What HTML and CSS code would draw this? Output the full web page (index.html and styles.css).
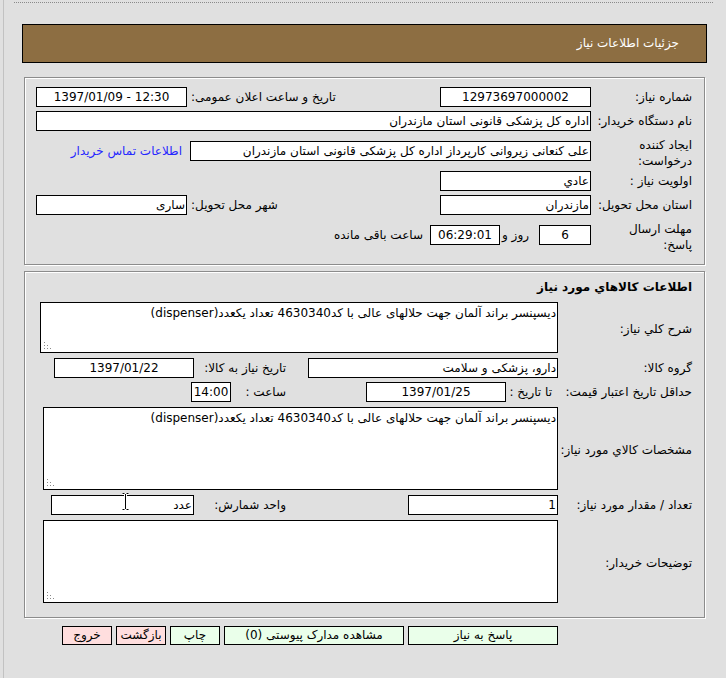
FILE: index.html
```html
<!DOCTYPE html>
<html lang="fa">
<head>
<meta charset="utf-8">
<title>جزئیات اطلاعات نیاز</title>
<link rel="stylesheet" href="styles.css">
</head>
<body>
<div class="page">
  <div class="topline"></div>
  <div class="header"><span>جزئیات اطلاعات نیاز</span></div>

  <div class="fs fs1">
    <div class="grid1">
      <div class="lbl">شماره نیاز:</div>
      <div class="cell"><div class="inp w151 c">12973697000002</div></div>
      <div class="lbl2">تاریخ و ساعت اعلان عمومی:</div>
      <div class="cell"><div class="inp w151 c ltr">1397/01/09 - 12:30</div></div>

      <div class="lbl">نام دستگاه خریدار:</div>
      <div class="cell span3"><div class="inp w555">اداره کل پزشکی قانونی استان مازندران</div></div>

      <div class="lbl two">ایجاد کننده<br>درخواست:</div>
      <div class="cell span2"><div class="inp w401">علی کنعانی زیروانی کارپرداز اداره کل پزشکی قانونی استان مازندران</div></div>
      <div class="cell"><a class="link" href="#">اطلاعات تماس خریدار</a></div>

      <div class="lbl">اولویت نیاز :</div>
      <div class="cell"><div class="inp w151">عادي</div></div>
      <div class="cell"></div>
      <div class="cell"></div>

      <div class="lbl">استان محل تحویل:</div>
      <div class="cell"><div class="inp w151">مازندران</div></div>
      <div class="lbl2">شهر محل تحویل:</div>
      <div class="cell"><div class="inp w151">ساری</div></div>

      <div class="lbl two">مهلت ارسال<br>پاسخ:</div>
      <div class="cell span3 remain">
        <div class="inp w52 c">6</div>
        <span class="days">روز و</span>
        <div class="inp w70 c">06:29:01</div>
        <span class="left">ساعت باقی مانده</span>
      </div>
    </div>
  </div>

  <div class="fs fs2">
    <div class="title">اطلاعات کالاهاي مورد نیاز</div>

    <div class="row r51">
      <div class="lbl">شرح کلي نیاز:</div>
      <div class="cell"><div class="ta w518 h51">دیسپنسر براند آلمان جهت حلالهای عالی با کد4630340 تعداد یکعدد(dispenser)<span class="grip"><svg width="8" height="8" viewBox="0 0 8 8"><rect x="0" y="0" width="1" height="1"/><rect x="0" y="3" width="1" height="1"/><rect x="3" y="3" width="1" height="1"/><rect x="0" y="6" width="1" height="1"/><rect x="3" y="6" width="1" height="1"/><rect x="6" y="6" width="1" height="1"/></svg></span></div></div>
    </div>

    <div class="row r20 mt5">
      <div class="lbl">گروه کالا:</div>
      <div class="sub">
        <div class="cell"><div class="inp w250">دارو، پزشکی و سلامت</div></div>
        <div class="slbl">تاریخ نیاز به کالا:</div>
        <div class="cell"><div class="inp w140 c">1397/01/22</div></div>
      </div>
    </div>

    <div class="row r20 mt4">
      <div class="lbl nowrap">حداقل تاریخ اعتبار قیمت:</div>
      <div class="flexrow">
        <div class="tolbl">تا تاریخ :</div>
        <div class="inp w140 c">1397/01/25</div>
        <div class="gap62"></div>
        <div class="timelbl">ساعت :</div>
        <div class="inp w40 c">14:00</div>
      </div>
    </div>

    <div class="row r83 mt5">
      <div class="lbl">مشخصات کالاي مورد نیاز:</div>
      <div class="cell"><div class="ta w515 h83">دیسپنسر براند آلمان جهت حلالهای عالی با کد4630340 تعداد یکعدد(dispenser)<span class="grip"><svg width="8" height="8" viewBox="0 0 8 8"><rect x="0" y="0" width="1" height="1"/><rect x="0" y="3" width="1" height="1"/><rect x="3" y="3" width="1" height="1"/><rect x="0" y="6" width="1" height="1"/><rect x="3" y="6" width="1" height="1"/><rect x="6" y="6" width="1" height="1"/></svg></span></div></div>
    </div>

    <div class="row r20 mt5">
      <div class="lbl">تعداد / مقدار مورد نیاز:</div>
      <div class="sub">
        <div class="cell"><div class="inp w150">1</div></div>
        <div class="slbl">واحد شمارش:</div>
        <div class="cell"><div class="inp w143">عدد</div></div>
      </div>
    </div>

    <div class="row r83 mt5">
      <div class="lbl">توضیحات خریدار:</div>
      <div class="cell"><div class="ta w515 h83"><span class="grip"><svg width="8" height="8" viewBox="0 0 8 8"><rect x="0" y="0" width="1" height="1"/><rect x="0" y="3" width="1" height="1"/><rect x="3" y="3" width="1" height="1"/><rect x="0" y="6" width="1" height="1"/><rect x="3" y="6" width="1" height="1"/><rect x="6" y="6" width="1" height="1"/></svg></span></div></div>
    </div>
  </div>

  <div class="buttons">
    <div class="btn green w150">پاسخ به نیاز</div>
    <div class="btn green w180">مشاهده مدارک پیوستی (0)</div>
    <div class="btn green w50">چاپ</div>
    <div class="btn pink w50">بازگشت</div>
    <div class="btn pink w50">خروج</div>
  </div>

  <svg class="ibeam" width="9" height="17" viewBox="0 0 9 17"><path d="M1 0.5H8M1 16.5H8M4.5 0.5V16.5" stroke="#fff" stroke-width="3" fill="none"/><path d="M1.5 0.5H3.5M5.5 0.5H7.5M4.5 1V16M1.5 16.5H3.5M5.5 16.5H7.5" stroke="#000" stroke-width="1" fill="none"/></svg>
</div>
</body>
</html>
```

FILE: styles.css
```css
html, body {
  margin: 0;
  padding: 0;
}
body {
  background: #e0e0e0;
  font-family: Tahoma, "DejaVu Sans", sans-serif;
  font-size: 12px;
  color: #000;
}
.page {
  position: relative;
  margin-left: 3px;
  border-left: 1px solid #c2c2c2;
  min-height: 678px;
  padding-top: 2px;
  box-sizing: border-box;
}
.topline {
  margin: 0 13px 0 10px;
  border-top: 1px dotted #8a8a8a;
}
.header {
  margin: 21px 0 0 18px;
  width: 685px;
  height: 39px;
  box-sizing: border-box;
  border: 1px solid #000;
  background: #8d6e42;
  color: #fff;
  direction: rtl;
  text-align: right;
  padding-right: 27px;
  line-height: 37px;
  font-size: 12px;
}
.fs {
  margin-left: 20px;
  width: 681px;
  box-sizing: border-box;
  border: 1px solid #8c8c8c;
  box-shadow: inset 1px 1px 0 #fff, 1px 1px 0 #fff;
  direction: rtl;
}
.fs1 {
  margin-top: 14px;
  height: 188px;
  padding-top: 7px;
}
.fs2 {
  margin-top: 6px;
  height: 347px;
}
.grid1 {
  display: grid;
  grid-template-columns: 110px 158px 246px 165px;
  grid-template-rows: 24px 24px 36px 24px 24px 36px;
  align-items: center;
}
.lbl {
  text-align: right;
  padding-right: 12px;
  white-space: nowrap;
}
.lbl.two {
  line-height: 16px;
  padding-top: 3px;
}
.lbl2 {
  text-align: left;
  padding-left: 1px;
  white-space: nowrap;
}
.cell {
  display: flex;
  align-items: center;
  min-width: 0;
}
.span3 { grid-column: span 3; }
.span2 { grid-column: span 2; }
.inp {
  height: 20px;
  box-sizing: border-box;
  border: 1px solid #000;
  background: #fff;
  margin-right: 3px;
  line-height: 18px;
  padding: 0 1px;
  white-space: nowrap;
  overflow: hidden;
  text-align: right;
}
.inp.c { text-align: center; }
.inp.ltr { direction: ltr; }
.w40 { width: 40px; }
.w52 { width: 52px; }
.w70 { width: 70px; }
.w140 { width: 140px; }
.w143 { width: 143px; }
.w150 { width: 150px; }
.w151 { width: 151px; }
.w250 { width: 250px; }
.w401 { width: 401px; }
.w555 { width: 555px; }
.w515 { width: 515px; }
.w518 { width: 518px; }
.link {
  color: #2626ff;
  text-decoration: none;
  margin-right: 8px;
  white-space: nowrap;
}
.remain .inp { margin-right: 0; }
.remain .w52 { margin-right: 3px; }
.days { margin: 0 10px 0 2px; white-space: nowrap; }
.left { margin-right: 7px; white-space: nowrap; }

.title {
  height: 30px;
  line-height: 30px;
  padding-right: 12px;
  font-weight: bold;
  text-align: right;
}
.row {
  display: grid;
  grid-template-columns: 143px 536px;
  align-items: center;
}
.r20 { height: 20px; }
.r51 { height: 51px; }
.r83 { height: 83px; }
.mt4 { margin-top: 4px; }
.mt5 { margin-top: 5px; }
.r51 .lbl, .r83 .lbl { padding-top: 3px; }
.sub {
  display: grid;
  grid-template-columns: 257px 107px 172px;
  align-items: center;
}
.slbl {
  text-align: right;
  padding-right: 18px;
  white-space: nowrap;
}
.flexrow {
  display: flex;
  align-items: center;
}
.tolbl {
  width: 55px;
  box-sizing: border-box;
  padding-right: 9px;
  text-align: right;
  white-space: nowrap;
}
.flexrow .inp { margin-right: 0; }
.gap62 { width: 62px; }
.timelbl {
  width: 73px;
  box-sizing: border-box;
  padding-right: 18px;
  text-align: right;
  white-space: nowrap;
}
.ta {
  position: relative;
  box-sizing: border-box;
  border: 1px solid #000;
  background: #fff;
  margin-right: 3px;
  padding: 2px 1px 0 1px;
  line-height: 16px;
  text-align: right;
  overflow: hidden;
}
.h51 { height: 51px; }
.h83 { height: 83px; }
.grip {
  position: absolute;
  left: 3px;
  bottom: 2px;
  width: 8px;
  height: 8px;
  line-height: 0;
}
.grip svg { fill: #8a8a8a; }

.buttons {
  display: flex;
  direction: rtl;
  gap: 4px;
  margin-top: 8px;
  padding-right: 168px;
}
.btn {
  height: 19px;
  box-sizing: border-box;
  border: 1px solid #000;
  line-height: 17px;
  text-align: center;
  white-space: nowrap;
}
.btn.w50 { width: 50px; }
.btn.w150 { width: 150px; }
.btn.w180 { width: 180px; }
.green { background: #eaffea; }
.pink { background: #ffdede; }
.ibeam {
  position: absolute;
  left: 117px;
  top: 493px;
}
```
